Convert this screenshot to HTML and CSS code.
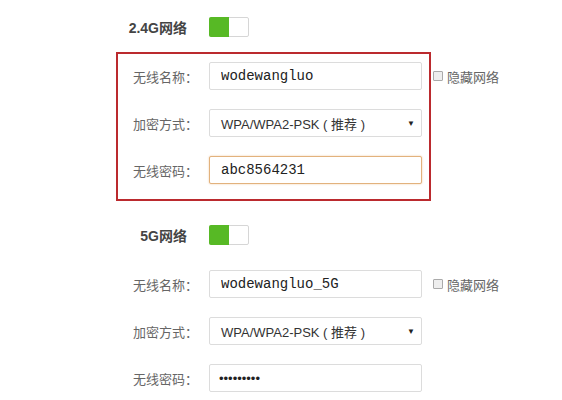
FILE: index.html
```html
<!DOCTYPE html>
<html lang="zh-CN">
<head>
    <meta charset="UTF-8">
    <meta name="viewport" content="width=device-width, initial-scale=1.0">
    <title>无线设置</title>
    <link rel="stylesheet" href="styles.css">
</head>
<body>

    <div class="wifi">
        <!-- 2.4G -->
        <div class="band-head">
            <span class="band-name">2.4G网络</span>
            <span class="switch on"></span>
        </div>
        <div class="band-box highlight">
            <div class="row">
                <label class="row-label">无线名称：</label>
                <input type="text" class="field" value="wodewangluo">
                <label class="hide-net"><span class="check"></span>隐藏网络</label>
            </div>
            <div class="row">
                <label class="row-label">加密方式：</label>
                <div class="field select">WPA/WPA2-PSK ( 推荐 )<span class="arrow">&#9660;</span></div>
            </div>
            <div class="row">
                <label class="row-label">无线密码：</label>
                <input type="text" class="field focused" value="abc8564231">
            </div>
        </div>

        <!-- 5G -->
        <div class="band-head">
            <span class="band-name">5G网络</span>
            <span class="switch on"></span>
        </div>
        <div class="band-box">
            <div class="row">
                <label class="row-label">无线名称：</label>
                <input type="text" class="field" value="wodewangluo_5G">
                <label class="hide-net"><span class="check"></span>隐藏网络</label>
            </div>
            <div class="row">
                <label class="row-label">加密方式：</label>
                <div class="field select">WPA/WPA2-PSK ( 推荐 )<span class="arrow">&#9660;</span></div>
            </div>
            <div class="row">
                <label class="row-label">无线密码：</label>
                <input type="password" class="field pass" value="123456789">
            </div>
        </div>
    </div>

</body>
</html>
```

FILE: styles.css
```css
/* General */
body {
    margin: 0;
    padding: 17px 0 0 0;
    background-color: #ffffff;
    font-family: "Liberation Sans", "Noto Sans CJK SC", sans-serif;
    color: #666;
}

.wifi {
    margin-left: 116px;
}

/* Band header */
.band-head {
    display: flex;
    align-items: center;
    height: 20px;
    margin-bottom: 15px;
}

.band-name {
    width: 71px;
    text-align: right;
    font-size: 14px;
    font-weight: bold;
    color: #444;
}

.switch {
    position: relative;
    width: 40px;
    height: 20px;
    margin-left: 22px;
    box-sizing: border-box;
    border: 1px solid #d6d6d6;
    border-radius: 2px;
    background-color: #fff;
}

.switch.on::before {
    content: "";
    position: absolute;
    top: -1px;
    left: -1px;
    width: 20px;
    height: 20px;
    border-radius: 2px 0 0 2px;
    background-color: #57b925;
}

/* Box with form rows */
.band-box {
    width: 315px;
    box-sizing: border-box;
    border: 2px solid transparent;
    padding: 8px 0 15px 15px;
    margin-bottom: 24px;
    display: flex;
    flex-direction: column;
    gap: 19px;
}

.band-box:last-child {
    margin-bottom: 0;
    padding-bottom: 0;
}

.band-box.highlight {
    border-color: #bb2a2e;
}

.row {
    display: flex;
    align-items: center;
    height: 28px;
}

.row-label {
    width: 76px;
    flex-shrink: 0;
    font-size: 13px;
    color: #666;
}

.field {
    width: 213px;
    height: 28px;
    flex-shrink: 0;
    box-sizing: border-box;
    border: 1px solid #dcdcdc;
    border-radius: 2px;
    padding: 0 0 0 11px;
    margin: 0;
    background-color: #fff;
    font-family: "Liberation Mono", monospace;
    font-size: 14px;
    color: #222;
    outline: none;
}

.field.focused {
    border-color: #e2b27d;
    box-shadow: 0 0 2px rgba(226, 160, 90, 0.6);
}

.field.pass {
    font-family: "Liberation Sans", sans-serif;
    font-size: 13px;
    padding-left: 9px;
}

.select {
    display: flex;
    align-items: center;
    justify-content: space-between;
    padding-right: 6px;
    font-family: "Liberation Sans", "Noto Sans CJK SC", sans-serif;
    font-size: 13px;
    color: #333;
}

.arrow {
    font-size: 8px;
    color: #222;
}

/* Hide network checkbox */
.hide-net {
    display: flex;
    align-items: center;
    flex-shrink: 0;
    margin-left: 11px;
    font-size: 13px;
    color: #666;
}

.check {
    width: 10px;
    height: 10px;
    box-sizing: border-box;
    border: 1px solid #aaa;
    border-radius: 1px;
    background-color: #eee;
    margin-right: 4px;
}
```
